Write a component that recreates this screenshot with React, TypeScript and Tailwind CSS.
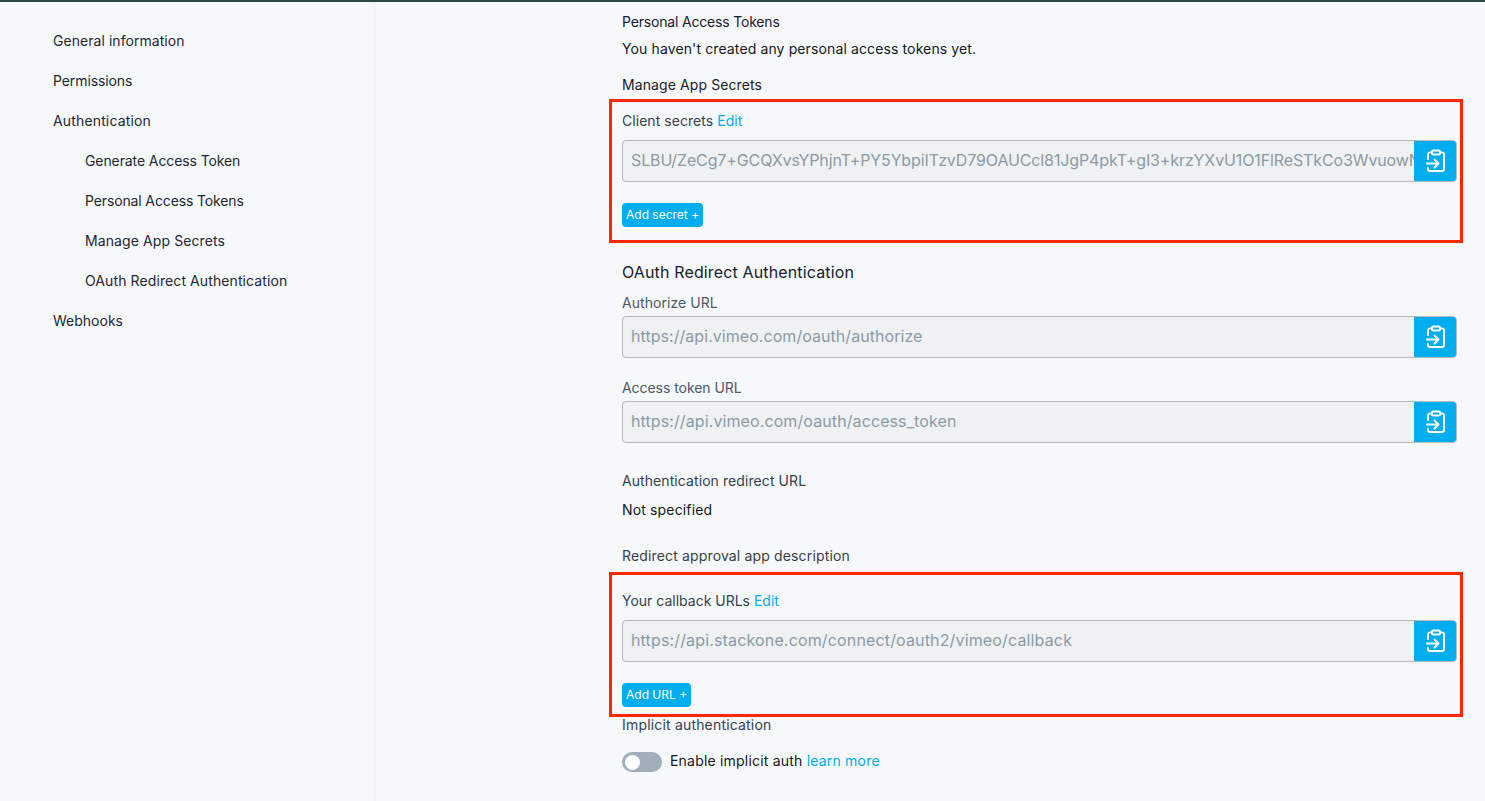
const font = { fontFamily: 'Inter, "Noto Sans", sans-serif' };

function PasteIcon() {
  return (
    <svg className="ml-[1px]" width="22" height="24" viewBox="0 0 22 24" fill="none" stroke="#fff" strokeWidth="2" strokeLinecap="round" strokeLinejoin="round">
      <rect x="7" y="1.5" width="8" height="4" rx="1.2" />
      <path d="M7 3.5H5a2 2 0 0 0-2 2V10" />
      <path d="M15 3.5h2a2 2 0 0 1 2 2V20a2 2 0 0 1-2 2H5a2 2 0 0 1-2-2v-1" />
      <path d="M2 14.5h11" />
      <path d="M9.5 10.5l4 4-4 4" />
    </svg>
  );
}

function CopyField({ value, className = "" }: { value: string; className?: string }) {
  return (
    <div className="flex h-[42px] w-full overflow-hidden rounded-[4px] border border-[#b4b9bd] bg-[#f0f1f3]">
      <div className={`min-w-0 flex-1 overflow-hidden whitespace-nowrap pl-[8px] text-[16px] leading-[39px] text-[#8a9aa6] ${className}`}>{value}</div>
      <div className="flex w-[42px] shrink-0 items-center justify-center bg-[#00adef]">
        <PasteIcon />
      </div>
    </div>
  );
}

function Line({ children, className = "" }: { children: React.ReactNode; className?: string }) {
  return <div className={`h-[20px] text-[14px] leading-[20px] ${className}`}>{children}</div>;
}

function NavItem({ label, sub, className = "" }: { label: string; sub?: boolean; className?: string }) {
  return (
    <div className={`h-[40px] text-[14px] leading-[40px] text-[#1c2733] ${sub ? "pl-[85px]" : "pl-[53px]"} ${className}`}>{label}</div>
  );
}

function AddButton({ label }: { label: string }) {
  return (
    <button className="mt-[21px] block h-[24px] rounded-[4px] bg-[#00adef] px-[4px] text-[12px] leading-[24px] text-white">{label}</button>
  );
}

export default function App() {
  return (
    <div className="h-[801px] overflow-hidden bg-[#f7f8fa]" style={font}>
      <div className="h-[2px] bg-[#2c4a45]" />
      <div className="flex h-[799px]">
        <aside className="w-[375px] shrink-0 border-r border-[#eff0f2] pt-[19px]">
          <NavItem label="General information" className="tracking-[0.05px]" />
          <NavItem label="Permissions" className="tracking-[-0.1px]" />
          <NavItem label="Authentication" className="tracking-[0.15px]" />
          <NavItem label="Generate Access Token" sub className="tracking-[-0.1px]" />
          <NavItem label="Personal Access Tokens" sub className="tracking-[-0.13px]" />
          <NavItem label="Manage App Secrets" sub className="tracking-[0.1px]" />
          <NavItem label="OAuth Redirect Authentication" sub className="tracking-[0.1px]" />
          <NavItem label="Webhooks" />
        </aside>
        <main className="min-w-0 flex-1 pl-[247px] pr-[28px] pt-[10px] text-[#1c2733]">
          <Line className="tracking-[-0.18px] text-[#16202b]">Personal Access Tokens</Line>
          <Line className="mt-[7px] tracking-[0.12px] text-[#111922]">You haven't created any personal access tokens yet.</Line>
          <Line className="mt-[16px] tracking-[0.1px] text-[#16202b]">Manage App Secrets</Line>
          <section className="mt-[4px] -ml-[13px] -mr-[6px] border-[3px] border-[#ff2600] pb-[13px] pl-[10px] pr-[3px] pt-[9px]">
            <Line className="tracking-[0.05px] text-[#33414f]">Client secrets <span className="text-[#00adef]">Edit</span></Line>
            <div className="mt-[9px]">
              <CopyField className="tracking-[-0.12px]" value="SLBU/ZeCg7+GCQXvsYPhjnT+PY5YbpiITzvD79OAUCcl81JgP4pkT+gI3+krzYXvU1O1FlReSTkCo3WvuowNxQ2" />
            </div>
            <AddButton label="Add secret +" />
          </section>
          <div className="mt-[17px] h-[24px] text-[16px] leading-[24px] tracking-[0.14px] text-[#16202b]">OAuth Redirect Authentication</div>
          <Line className="mt-[9px] tracking-[0.05px] text-[#4a5a68]">Authorize URL</Line>
          <div className="mt-[3px]"><CopyField className="tracking-[0.05px]" value="https://api.vimeo.com/oauth/authorize" /></div>
          <Line className="mt-[20px] tracking-[-0.05px] text-[#4a5a68]">Access token URL</Line>
          <div className="mt-[3px]"><CopyField className="tracking-[0.1px]" value="https://api.vimeo.com/oauth/access_token" /></div>
          <Line className="mt-[28px] tracking-[0.08px] text-[#33414f]">Authentication redirect URL</Line>
          <Line className="mt-[9px] tracking-[0.15px] text-[#111922]">Not specified</Line>
          <Line className="mt-[26px] tracking-[0.15px] text-[#33414f]">Redirect approval app description</Line>
          <section className="mt-[6px] -ml-[13px] -mr-[6px] border-[3px] border-[#ff2600] pb-[7px] pl-[10px] pr-[3px] pt-[16px]">
            <Line className="text-[#33414f]">Your callback URLs <span className="text-[#00adef]">Edit</span></Line>
            <div className="mt-[9px]">
              <CopyField className="tracking-[0.15px]" value="https://api.stackone.com/connect/oauth2/vimeo/callback" />
            </div>
            <AddButton label="Add URL +" />
          </section>
          <Line className="-mt-[2px] tracking-[0.18px] text-[#33414f]">Implicit authentication</Line>
          <div className="mt-[17px] flex h-[20px] items-center">
            <div className="flex h-[20px] w-[40px] items-center rounded-full bg-[#a0aebc] pl-[3px]">
              <div className="h-[15px] w-[15px] rounded-full bg-white" />
            </div>
            <span className="ml-[8px] pb-[2px] text-[14px] leading-[18px] tracking-[0.2px] text-[#111922]">Enable implicit auth <span className="text-[#00adef]">learn more</span></span>
          </div>
        </main>
      </div>
    </div>
  );
}
